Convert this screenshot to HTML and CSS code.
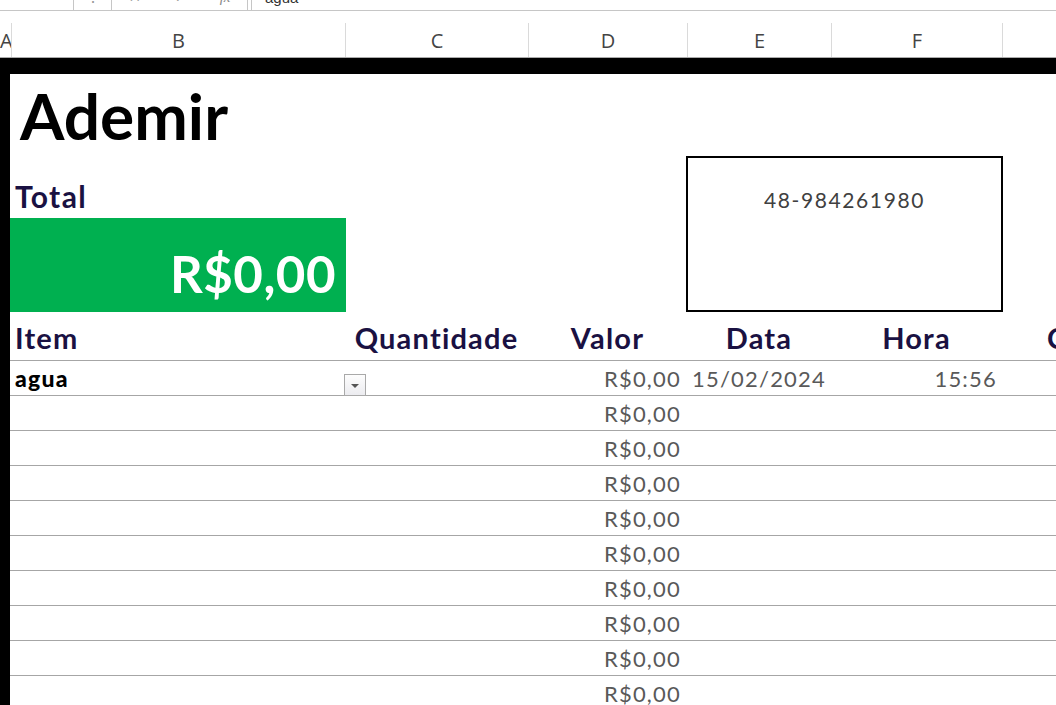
FILE: index.html
```html
<!DOCTYPE html>
<html lang="pt-br">
<head>
<meta charset="UTF-8" />
<title>Ademir - Controle</title>
<link rel="stylesheet" href="styles.css">
</head>
<body>
<div class="formula-bar">
  <div class="name-box"></div>
  <div class="bar-grip">⋮</div>
  <div class="fx-buttons">
    <span class="fx-icon">✕</span>
    <span class="fx-icon">✓</span>
    <span class="fx-icon fx-label">fx</span>
  </div>
  <div class="formula-input"><span>agua</span></div>
</div>

<div class="col-heads">
  <div class="col-head col-a">A</div>
  <div class="col-head">B</div>
  <div class="col-head">C</div>
  <div class="col-head">D</div>
  <div class="col-head">E</div>
  <div class="col-head">F</div>
  <div class="col-head">G</div>
</div>

<div class="sheet">
  <div class="top-area">
    <div class="summary">
      <div class="client-name">Ademir</div>
      <div class="total-label">Total</div>
      <div class="total-value">R$0,00</div>
    </div>
    <div class="phone-box">48-984261980</div>
  </div>

  <div class="table">
    <div class="row head-row">
      <div class="cell left">Item</div>
      <div class="cell">Quantidade</div>
      <div class="cell">Valor</div>
      <div class="cell">Data</div>
      <div class="cell">Hora</div>
      <div class="cell">Cliente</div>
    </div>
    <div class="row">
      <div class="cell item">agua</div>
      <div class="cell qty"><span class="drop-btn"></span></div>
      <div class="cell money">R$0,00</div>
      <div class="cell date">15/02/2024</div>
      <div class="cell time">15:56</div>
      <div class="cell"></div>
    </div>
    <div class="row"><div class="cell"></div><div class="cell"></div><div class="cell money">R$0,00</div><div class="cell"></div><div class="cell"></div><div class="cell"></div></div>
    <div class="row"><div class="cell"></div><div class="cell"></div><div class="cell money">R$0,00</div><div class="cell"></div><div class="cell"></div><div class="cell"></div></div>
    <div class="row"><div class="cell"></div><div class="cell"></div><div class="cell money">R$0,00</div><div class="cell"></div><div class="cell"></div><div class="cell"></div></div>
    <div class="row"><div class="cell"></div><div class="cell"></div><div class="cell money">R$0,00</div><div class="cell"></div><div class="cell"></div><div class="cell"></div></div>
    <div class="row"><div class="cell"></div><div class="cell"></div><div class="cell money">R$0,00</div><div class="cell"></div><div class="cell"></div><div class="cell"></div></div>
    <div class="row"><div class="cell"></div><div class="cell"></div><div class="cell money">R$0,00</div><div class="cell"></div><div class="cell"></div><div class="cell"></div></div>
    <div class="row"><div class="cell"></div><div class="cell"></div><div class="cell money">R$0,00</div><div class="cell"></div><div class="cell"></div><div class="cell"></div></div>
    <div class="row"><div class="cell"></div><div class="cell"></div><div class="cell money">R$0,00</div><div class="cell"></div><div class="cell"></div><div class="cell"></div></div>
    <div class="row"><div class="cell"></div><div class="cell"></div><div class="cell money">R$0,00</div><div class="cell"></div><div class="cell"></div><div class="cell"></div></div>
  </div>
</div>
</body>
</html>
```

FILE: styles.css
```css
html, body {
  margin: 0;
  padding: 0;
  background: #fff;
  overflow: hidden;
  font-family: 'Lato', 'Liberation Sans', sans-serif;
}
body {
  width: 1056px;
  height: 705px;
}

/* barra de formula (cortada no topo) */
.formula-bar {
  display: flex;
  height: 10px;
  border-bottom: 1px solid #c6c6c6;
  overflow: hidden;
  color: #6d6d6d;
}
.name-box {
  width: 73px;
  border-right: 1px solid #c6c6c6;
}
.bar-grip {
  width: 37px;
  text-align: center;
  font-size: 16px;
  line-height: 16px;
  margin-top: -12px;
  color: #999;
}
.fx-buttons {
  width: 135px;
  border-left: 1px solid #c6c6c6;
  border-right: 1px solid #c6c6c6;
  display: flex;
  justify-content: space-around;
}
.fx-icon {
  font-family: 'DejaVu Sans', sans-serif;
  font-size: 15px;
  line-height: 16px;
  margin-top: -11px;
  color: #888;
}
.fx-label {
  font-family: 'Liberation Serif', serif;
  font-style: italic;
}
.formula-input {
  flex: 1;
  margin-left: 3px;
  border-left: 1px solid #c6c6c6;
  padding-left: 13px;
  font-family: 'Liberation Sans', sans-serif;
  font-size: 15px;
  line-height: 16px;
}
.formula-input span {
  display: block;
  margin-top: -10px;
  color: #333;
}

/* cabecalho das colunas */
.col-heads {
  display: grid;
  grid-template-columns: 12px 334px 183px 159px 144px 171px 190px;
  margin-top: 12px;
  height: 34px;
  border-bottom: 1px solid #ababab;
}
.col-head {
  border-right: 1px solid #dadada;
  text-align: center;
  font-family: 'Open Sans', sans-serif;
  font-size: 20px;
  line-height: 36px;
  color: #444;
  overflow: hidden;
}
.col-a {
  text-align: right;
  padding-right: 3px;
}

/* planilha */
.sheet {
  border-top: 16px solid #000;
  border-left: 10px solid #000;
  width: 1200px;
  height: 640px;
}
.top-area {
  display: flex;
}
.summary {
  width: 336px;
}
.client-name {
  font-size: 64px;
  font-weight: 700;
  line-height: 84px;
  height: 84px;
  padding-left: 10px;
  color: #000;
}
.total-label {
  font-size: 30px;
  font-weight: 700;
  line-height: 36px;
  letter-spacing: 1.4px;
  padding: 20px 0 4px 5px;
  color: #1a1142;
}
.total-value {
  height: 94px;
  background-color: #00b050;
  color: #fff;
  font-size: 51px;
  font-weight: 700;
  line-height: 60px;
  letter-spacing: 0.5px;
  display: flex;
  align-items: flex-end;
  justify-content: flex-end;
  padding-right: 10px;
  padding-bottom: 8px;
  box-sizing: border-box;
}
.phone-box {
  box-sizing: border-box;
  margin-left: 340px;
  margin-top: 82px;
  width: 317px;
  height: 156px;
  border: 2px solid #000;
  text-align: center;
  padding-top: 29px;
  font-size: 21px;
  line-height: 26px;
  letter-spacing: 1.6px;
  color: #404040;
}

/* tabela */
.row {
  display: grid;
  grid-template-columns: 335px 183px 159px 144px 171px 190px;
  height: 34px;
  border-bottom: 1px solid #a6a6a6;
}
.head-row {
  height: 44px;
  padding-top: 4px;
}
.head-row .cell {
  font-size: 29px;
  font-weight: 700;
  line-height: 44px;
  text-align: center;
  color: #1a1142;
  letter-spacing: 1.2px;
  white-space: nowrap;
}
.head-row .cell.left {
  text-align: left;
  padding-left: 5px;
}
.cell {
  font-size: 22px;
  line-height: 35px;
  color: #595959;
  white-space: nowrap;
}
.item {
  font-weight: 900;
  font-size: 23px;
  color: #000;
  padding-left: 5px;
  letter-spacing: 1.2px;
}
.qty {
  display: flex;
  align-items: flex-end;
}
.drop-btn {
  box-sizing: border-box;
  width: 22px;
  height: 22px;
  margin-left: -1px;
  border: 1px solid #a9a9a9;
  background: linear-gradient(#fdfdfd, #ececf0);
  display: flex;
  align-items: center;
  justify-content: center;
}
.drop-btn::after {
  content: "";
  border-left: 4px solid transparent;
  border-right: 4px solid transparent;
  border-top: 4px solid #555;
  margin-top: 1px;
}
.money {
  text-align: right;
  padding-right: 6px;
  letter-spacing: 1.2px;
}
.date {
  text-align: center;
  letter-spacing: 1.2px;
}
.time {
  text-align: right;
  padding-right: 5px;
  letter-spacing: 1.2px;
}
```
